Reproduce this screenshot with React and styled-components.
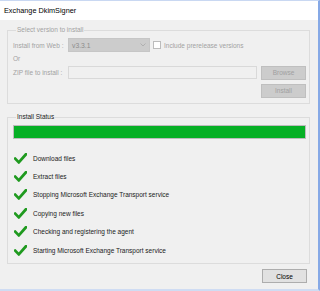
import React from 'react'
import styled, {createGlobalStyle} from 'styled-components'

const Global = createGlobalStyle`
    html, body { margin: 0; padding: 0; background: #f0f0f0; }
    body { font-family: 'Liberation Sans', Arial, sans-serif; }
`

const steps = [
    'Download files',
    'Extract files',
    'Stopping Microsoft Exchange Transport service',
    'Copying new files',
    'Checking and registering the agent',
    'Starting Microsoft Exchange Transport service',
]

const Check = () => (
    <svg width="13" height="11" viewBox="0 0 13 11">
        <path d="M1.2 5.6 L4.8 9.4 L12 1.2" fill="none" stroke="#1f9a1f" strokeWidth="2.8" strokeLinecap="round" strokeLinejoin="round" />
    </svg>
)

const App = () => {
    return (
        <>
        <Global />
        <Window>
            <TitleBar>Exchange DkimSigner</TitleBar>
            <Body>
                <Group>
                    <Legend $disabled>Select version to install</Legend>
                    <Row $h={14}>
                        <Label>Install from Web :</Label>
                        <Combo>
                            <span>v3.3.1</span>
                            <svg width="6" height="4" viewBox="0 0 6 4">
                                <path d="M0.5 0.5 L3 3 L5.5 0.5" fill="none" stroke="#a8a8a8" strokeWidth="0.8" />
                            </svg>
                        </Combo>
                        <CheckBox />
                        <Label>Include prerelease versions</Label>
                    </Row>
                    <Row $h={8} $top={2}>
                        <Label>Or</Label>
                    </Row>
                    <Row $h={13} $top={4}>
                        <Label>ZIP file to install :</Label>
                        <TextBox />
                        <Button disabled>Browse</Button>
                    </Row>
                    <Row $h={13} $top={5} $end>
                        <Button disabled>Install</Button>
                    </Row>
                </Group>
                <Group $status>
                    <Legend>Install Status</Legend>
                    <Progress><ProgressFill style={{width: '100%'}} /></Progress>
                    <StepList>
                        {steps.map(s => (
                            <Step key={s}>
                                <Check />
                                <span>{s}</span>
                            </Step>
                        ))}
                    </StepList>
                </Group>
                <Footer>
                    <Button>Close</Button>
                </Footer>
            </Body>
        </Window>
        </>
    )
}

export default App

const Window = styled.div`
    width: 320px;
    height: 291px;
    box-sizing: border-box;
    border-top: 1px solid #c9d8f2;
    border-right: 2px solid #86a9e6;
    border-bottom: 2px solid #cfdcf3;
    display: flex;
    flex-direction: column;
    background: #f0f0f0;
`

const TitleBar = styled.div`
    height: 19px;
    background: #fff;
    padding-left: 4px;
    font-size: 7.3px;
    line-height: 19px;
    color: #000;
`

const Body = styled.div`
    flex: 1;
    display: flex;
    flex-direction: column;
    padding: 0 8px 0 7px;
    font-size: 6.5px;
`

const Group = styled.fieldset`
    margin: ${p => p.$status ? '9px' : '6px'} 0 0 0;
    padding: 4px 3px ${p => p.$status ? '4px' : '6px'} 5px;
    border: 1px solid #dcdcdc;
    min-width: 0;
    display: flex;
    flex-direction: column;
`

const Legend = styled.legend`
    padding: 0 1px;
    margin-left: 3px;
    font-size: 6.5px;
    line-height: 8px;
    color: ${p => p.$disabled ? '#a2a2a2' : '#222'};
`

const Row = styled.div`
    display: flex;
    align-items: center;
    height: ${p => p.$h}px;
    margin-top: ${p => p.$top || 0}px;
    justify-content: ${p => p.$end ? 'flex-end' : 'flex-start'};
    color: #a2a2a2;
`

const Label = styled.span`
    white-space: nowrap;
    &:first-child { width: 55px; }
`

const Combo = styled.div`
    width: 82px;
    height: 14px;
    box-sizing: border-box;
    background: #cccccc;
    border: 1px solid #c6c6c6;
    display: flex;
    align-items: center;
    justify-content: space-between;
    padding: 0 3px 0 3px;
    color: #8d8d8d;
    font-size: 6.8px;
    margin-right: 3px;
`

const CheckBox = styled.div`
    width: 8px;
    height: 8px;
    box-sizing: border-box;
    border: 1px solid #bcbcbc;
    background: #fff;
    margin-right: 3px;
`

const TextBox = styled.div`
    width: 190px;
    height: 13px;
    box-sizing: border-box;
    border: 1px solid #d9d9d9;
    background: #f0f0f0;
    margin-right: 4px;
`

const Button = styled.button`
    width: 45px;
    height: 14px;
    box-sizing: border-box;
    padding: 0;
    font-family: inherit;
    font-size: 6.5px;
    background: ${p => p.disabled ? '#cccccc' : '#e1e1e1'};
    border: 1px solid ${p => p.disabled ? '#bfbfbf' : '#adadad'};
    color: ${p => p.disabled ? '#a0a0a0' : '#000'};
`

const Progress = styled.div`
    height: 14px;
    box-sizing: border-box;
    border: 1px solid #bcbcbc;
    background: #e6e6e6;
`

const ProgressFill = styled.div`
    height: 100%;
    background: #06b025;
`

const StepList = styled.div`
    display: flex;
    flex-direction: column;
    margin-top: 10px;
`

const Step = styled.div`
    height: 18.4px;
    display: flex;
    align-items: center;
    gap: 6px;
    padding-left: 1px;
    color: #1a1a1a;
    white-space: nowrap;
`

const Footer = styled.div`
    display: flex;
    justify-content: flex-end;
    padding: 5px 3px 0 0;
`
